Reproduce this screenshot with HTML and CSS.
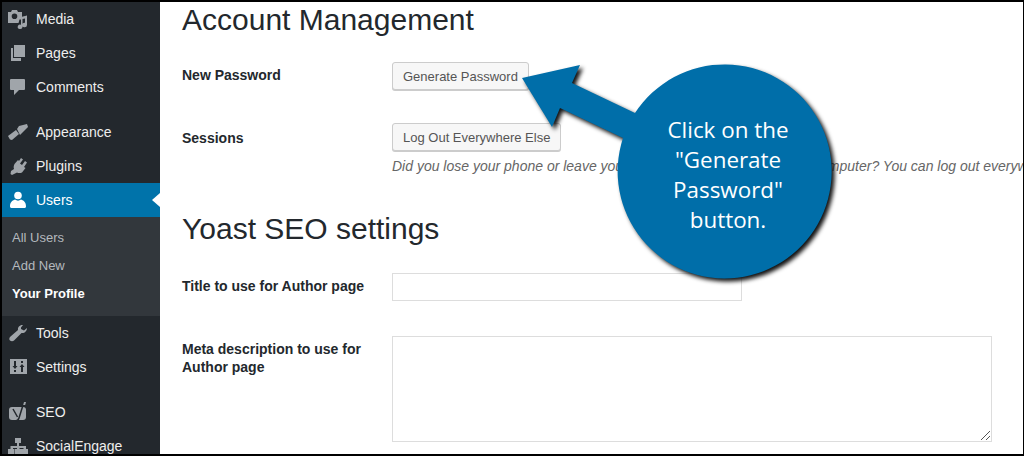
FILE: index.html
```html
<!DOCTYPE html>
<html lang="en">
<head>
<meta charset="utf-8">
<title>Account Management</title>
<link rel="stylesheet" href="styles.css">
</head>
<body>
<div class="frame">
  <nav class="sidebar">
    <a class="item"><svg class="icon" viewBox="0 0 20 20"><path d="M0 3h3l1-2h5l1 2h4v7.500h-2.500L10.500 14H0zM6.500 4.500a2.800 2.800 0 1 0 0 5.600 2.800 2.800 0 0 0 0-5.600z" fill-rule="evenodd"/><path d="M13 8l6-1.500V16a2.400 2.200 0 1 1-2-2.200V9.500l-2.500.6V18a2.400 2.200 0 1 1-1.500-2.200z"/></svg><span>Media</span></a>
    <a class="item"><svg class="icon" viewBox="0 0 20 20"><path d="M6 2h11v12H6zM3 5h2v10h8v3H3z"/></svg><span>Pages</span></a>
    <a class="item sep"><svg class="icon" viewBox="0 0 20 20"><path d="M3 2h13a1 1 0 0 1 1 1v9a1 1 0 0 1-1 1h-5l-5 5v-5H3a1 1 0 0 1-1-1V3a1 1 0 0 1 1-1z"/></svg><span>Comments</span></a>
    <a class="item"><svg class="icon" viewBox="0 0 20 20"><path d="M0 14l8-6 3 4-7 6-2-.5z"/><path d="M9 7l2-3 8-2 1 3-5 5-3 3z"/></svg><span>Appearance</span></a>
    <a class="item"><svg class="icon" viewBox="0 0 20 20"><path d="M13 2l2 1.500-3 4 2 1.500 3-4 2 1.500-3 4.500 1.500 1-3.500 4.500c-2 1-4 .5-5 0L6 18l-2 1-1.500-1 .5-3 3-2c-.5-1.500-.5-3 .5-5L10 4l1 1z"/></svg><span>Plugins</span></a>
    <a class="item current"><svg class="icon" viewBox="0 0 20 20"><circle cx="10" cy="5.500" r="3.800"/><path d="M2 16.500c0-4 2-6 5-7 2 1.500 4 1.500 6 0 3 1 5 3 5 7 0 1-1 1.500-2 1.500H4c-1 0-2-.5-2-1.500z"/></svg><span>Users</span></a>
    <div class="submenu">
      <a class="sub">All Users</a>
      <a class="sub">Add New</a>
      <a class="sub active">Your Profile</a>
    </div>
    <a class="item"><svg class="icon" viewBox="0 0 20 20"><path d="M15 2c-3-.5-5.500 2-5 5l-7.500 6.500C1 15 1 16.500 2 17.500s3 1 4 0l7.500-7.500c3 .5 5.500-2 5.500-5l-3 2.500-3-1.500V4.500z"/></svg><span>Tools</span></a>
    <a class="item sep"><svg class="icon" viewBox="0 0 20 20"><path d="M2 2h17v15H2zM6 4v5H4.500L7 12l2.500-3H8V4zM6 13v2h2v-2zM13 15v-5h-1.500L14 7l2.500 3H15v5zM13 4v2h2V4z" fill-rule="evenodd"/></svg><span>Settings</span></a>
    <a class="item"><svg class="icon" viewBox="0 0 20 20"><rect x="1" y="5" width="17" height="13" rx="3"/><path class="yoast-cut" d="M5 7l4.500 8M16 0l-5 16c-.5 2-2 3-4 3"/><path d="M16 0h2l-.8 3h-2z"/></svg><span>SEO</span></a>
    <a class="item"><svg class="icon" viewBox="0 0 20 20"><path d="M7 2h6v5h-2v3h7v3h2v5h-6.500v-5h2v-1h-4v1h2v5H7v-5h2v-1H5v1h1.500v5H0v-5h2.500v-3H9V7H7z"/></svg><span>SocialEngage</span></a>
  </nav>
  <main class="content">
    <h2 class="heading first">Account Management</h2>
    <div class="row row-password">
      <div class="label">New Password</div>
      <div class="field"><button class="btn">Generate Password</button></div>
    </div>
    <div class="row row-sessions">
      <div class="label label-sessions">Sessions</div>
      <div class="field">
        <button class="btn">Log Out Everywhere Else</button>
        <p class="desc">Did you lose your phone or leave your account logged in at a public computer? You can log out everywhere else, and stay logged in here.</p>
      </div>
    </div>
    <h2 class="heading second">Yoast SEO settings</h2>
    <div class="row row-title">
      <div class="label">Title to use for Author page</div>
      <div class="field"><div class="input"></div></div>
    </div>
    <div class="row row-meta">
      <div class="label">Meta description to use for Author page</div>
      <div class="field"><div class="textarea"><svg class="grip" viewBox="0 0 9 9"><path d="M0 9L9 0M5 9L9 5"/></svg></div></div>
    </div>
  </main>
  <div class="callout">
    <svg class="callout-shape" viewBox="0 0 330 230" width="330" height="230"><path d="M3 17L61 4L53 22L116 52A107 107 0 1 1 104 77L41 47L33 66Z"/></svg>
    <p class="callout-text">Click on the<br>"Generate<br>Password"<br>button.</p>
  </div>
</div>
</body>
</html>
```
FILE: styles.css
```css
* { box-sizing: border-box; }
html, body { margin: 0; padding: 0; }
body { width: 1024px; height: 456px; overflow: hidden; background: #000; font-family: "Liberation Sans", Arial, sans-serif; }
.frame { position: relative; display: flex; width: 1024px; height: 456px; border: solid #000; border-width: 2px 1px 2px 2px; overflow: hidden; background: #fff; }
.sidebar { width: 158px; flex: none; background: #23282d; color: #eee; font-size: 14px; }
.item { display: flex; align-items: center; height: 34px; padding-left: 6px; gap: 8px; position: relative; }
.item.sep { margin-bottom: 11px; }
.icon { width: 20px; height: 20px; fill: #a0a5aa; flex: none; overflow: visible; }
.yoast-cut { fill: none; stroke: #23282d; stroke-width: 1.500; }
.current { background: #0073aa; color: #fff; }
.current .icon { fill: #fff; }
.current::after { content: ""; position: absolute; right: 0; top: 10px; border: 7px solid transparent; border-right: 8px solid #fff; border-left-width: 0; }
.submenu { height: 99px; background: #32373c; padding-top: 6px; font-size: 13px; }
.sub { display: flex; align-items: center; height: 28px; padding-left: 10px; color: #b4b9be; }
.sub.active { color: #fff; font-weight: 700; }
.content { flex: 1; padding-left: 22px; min-width: 0; overflow: hidden; color: #23282d; }
.heading { margin: 0; font-weight: 400; font-size: 30px; line-height: 36px; color: #23282d; white-space: nowrap; }
.first { margin-top: 0; }
.second { margin-top: 36px; }
.row { display: grid; grid-template-columns: 210px 1fr; }
.row-password { margin-top: 24px; }
.row-sessions { margin-top: 33px; }
.row-title { margin-top: 26px; }
.row-meta { margin-top: 35px; }
.label { font-size: 14px; font-weight: 700; line-height: 18px; padding-top: 4px; padding-right: 20px; color: #23282d; }
.label-sessions { padding-top: 6px; }
.field { min-width: 0; }
.btn { display: block; height: 28px; padding: 0 10px; background: #f7f7f7; border: 1px solid #ccc; border-radius: 3px; box-shadow: 0 1px 0 #ccc; font: 13px "Liberation Sans", Arial, sans-serif; color: #555; white-space: nowrap; }
.desc { margin: 6px 0 0; font-size: 14px; line-height: 18px; font-style: italic; color: #666; white-space: nowrap; }
.input { width: 350px; height: 28px; border: 1px solid #ddd; background: #fff; }
.textarea { position: relative; width: 600px; height: 106px; border: 1px solid #ddd; background: #fff; }
.grip { position: absolute; right: 1px; bottom: 1px; width: 9px; height: 9px; fill: none; stroke: #555; stroke-width: 1; }
.callout { position: absolute; left: 517px; top: 59px; width: 330px; height: 230px; }
.callout-shape { display: block; fill: #006ea9; filter: drop-shadow(3px 3px 2px #111); overflow: visible; }
.callout-text { position: absolute; left: 102px; top: 54px; width: 214px; margin: 0; text-align: center; color: #fff; font: 22.400px/30px "Open Sans", sans-serif; }
```
